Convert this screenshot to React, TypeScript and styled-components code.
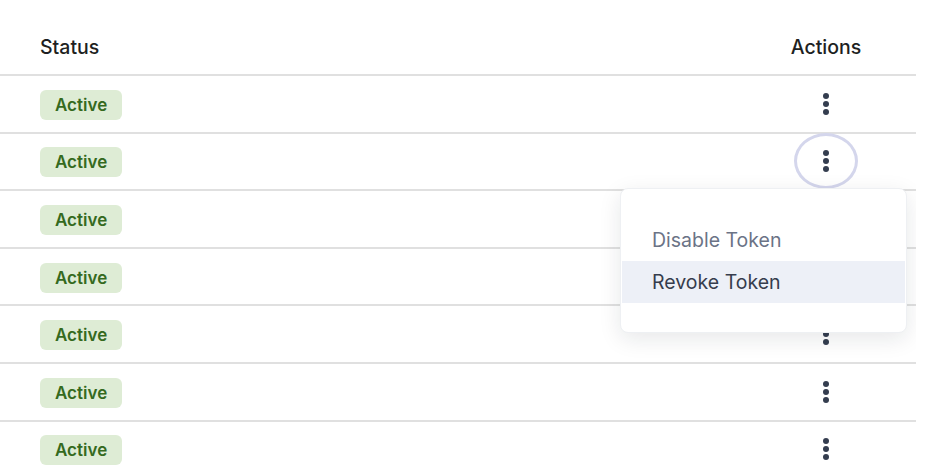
import styled, { createGlobalStyle } from "styled-components"

const GlobalStyle = createGlobalStyle`
  body {
    margin: 0;
    background: #ffffff;
    font-family: Inter, "Noto Sans", sans-serif;
  }
`

const Table = styled.div`
  width: 916px;
  overflow: hidden;
  height: 472px;
`

const Row = styled.div<{ $header?: boolean }>`
  display: grid;
  grid-template-columns: 1fr 180px;
  align-items: center;
  height: ${(props) => (props.$header ? "76px" : "57.6px")};
  padding-top: ${(props) => (props.$header ? "20px" : "0")};
  box-sizing: border-box;
  border-bottom: 2px solid #e0e0e0;
`

const HeadCell = styled.div<{ $center?: boolean }>`
  padding-left: ${(props) => (props.$center ? "0" : "40px")};
  text-align: ${(props) => (props.$center ? "center" : "left")};
  font-size: 19.5px;
  font-weight: 500;
  color: #1e1f22;
`

const StatusCell = styled.div`
  padding-left: 40px;
  padding-top: 2px;
`

const Badge = styled.span`
  display: inline-flex;
  align-items: center;
  height: 30px;
  padding: 0 15px;
  border-radius: 6px;
  background: #deecd5;
  color: #356a1e;
  font-size: 17px;
  font-weight: 600;
`

const ActionCell = styled.div`
  position: relative;
  display: flex;
  justify-content: center;
  align-items: center;
  height: 55.6px;
`

const KebabButton = styled.button<{ $focused?: boolean }>`
  width: 64px;
  height: 56px;
  border-radius: 50%;
  border: 3px solid ${(props) => (props.$focused ? "#d4d6ec" : "transparent")};
  background: transparent;
  display: flex;
  align-items: center;
  justify-content: center;
  padding: 0;
  cursor: pointer;
`

const Menu = styled.div`
  position: absolute;
  top: 54px;
  right: 9px;
  width: 287px;
  box-sizing: border-box;
  padding: 30px 1px 29px;
  background: #ffffff;
  border: 1px solid #eef0f3;
  border-radius: 8px;
  box-shadow: 0 6px 22px rgba(20, 25, 40, 0.1);
  z-index: 2;
`

const MenuItem = styled.div<{ $active?: boolean; $muted?: boolean }>`
  height: 42px;
  display: flex;
  align-items: center;
  padding-left: 30px;
  font-size: 19.5px;
  color: ${(props) => (props.$muted ? "#6b7386" : "#363d4d")};
  background: ${(props) => (props.$active ? "#edf0f7" : "transparent")};
`

const Kebab = () => (
  <svg width="8" height="22" viewBox="0 0 8 22">
    <circle cx="4" cy="3" r="3" fill="#343d4f" />
    <circle cx="4" cy="11" r="3" fill="#343d4f" />
    <circle cx="4" cy="19" r="3" fill="#343d4f" />
  </svg>
)

const rows = [0, 1, 2, 3, 4, 5, 6]

export default function App() {
  return (
    <>
      <GlobalStyle />
      <Table>
        <Row $header>
          <HeadCell>Status</HeadCell>
          <HeadCell $center>Actions</HeadCell>
        </Row>
        {rows.map((i) => (
          <Row key={i}>
            <StatusCell>
              <Badge>Active</Badge>
            </StatusCell>
            <ActionCell>
              <KebabButton $focused={i === 1}>
                <Kebab />
              </KebabButton>
              {i === 1 && (
                <Menu>
                  <MenuItem $muted>Disable Token</MenuItem>
                  <MenuItem $active>Revoke Token</MenuItem>
                </Menu>
              )}
            </ActionCell>
          </Row>
        ))}
      </Table>
    </>
  )
}
